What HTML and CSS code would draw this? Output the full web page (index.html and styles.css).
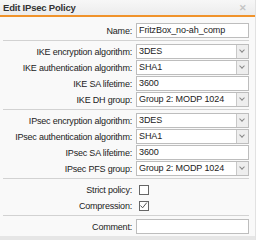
FILE: index.html
```html
<!DOCTYPE html>
<html>
<head>
    <meta charset="utf-8">
    <title>Edit IPsec Policy</title>
    <link rel="stylesheet" href="styles.css">
</head>
<body>
    <div class="dialog">
        <div class="dialog-header">
            <span class="dialog-title">Edit IPsec Policy</span>
            <span class="dialog-close">&#x2715;</span>
        </div>
        <div class="dialog-body">
            <div class="section">
                <div class="row">
                    <label>Name:</label>
                    <div class="field">FritzBox_no-ah_comp</div>
                </div>
            </div>
            <div class="section">
                <div class="row">
                    <label>IKE encryption algorithm:</label>
                    <div class="field select">3DES<span class="arrow"></span></div>
                </div>
                <div class="row">
                    <label>IKE authentication algorithm:</label>
                    <div class="field select">SHA1<span class="arrow"></span></div>
                </div>
                <div class="row">
                    <label>IKE SA lifetime:</label>
                    <div class="field">3600</div>
                </div>
                <div class="row">
                    <label>IKE DH group:</label>
                    <div class="field select">Group 2: MODP 1024<span class="arrow"></span></div>
                </div>
            </div>
            <div class="section">
                <div class="row">
                    <label>IPsec encryption algorithm:</label>
                    <div class="field select">3DES<span class="arrow"></span></div>
                </div>
                <div class="row">
                    <label>IPsec authentication algorithm:</label>
                    <div class="field select">SHA1<span class="arrow"></span></div>
                </div>
                <div class="row">
                    <label>IPsec SA lifetime:</label>
                    <div class="field">3600</div>
                </div>
                <div class="row">
                    <label>IPsec PFS group:</label>
                    <div class="field select">Group 2: MODP 1024<span class="arrow"></span></div>
                </div>
            </div>
            <div class="section">
                <div class="row">
                    <label>Strict policy:</label>
                    <div><span class="checkbox"></span></div>
                </div>
                <div class="row">
                    <label>Compression:</label>
                    <div><span class="checkbox">
                        <svg width="9" height="9" viewBox="0 0 9 9"><path d="M1.5 4.5 L3.6 6.8 L7.8 1.6" fill="none" stroke="#555" stroke-width="1"/></svg>
                    </span></div>
                </div>
            </div>
            <div class="section">
                <div class="row">
                    <label>Comment:</label>
                    <div class="field"></div>
                </div>
            </div>
        </div>
        <div class="dialog-footer"></div>
    </div>
</body>
</html>
```

FILE: styles.css
```css
body { margin: 0; font-family: "Liberation Sans", Arial, sans-serif; font-size: 9px; color: #222; background: #fff; }
.dialog { width: 255px; height: 240px; background: #f9f9f9; border-right: 1px solid #e2e2e2; display: flex; flex-direction: column; }
.dialog-header { height: 16px; display: flex; align-items: center; justify-content: space-between; padding: 0 8px 0 3px; background: linear-gradient(#f7f7f7, #ececec); border-bottom: 2px solid #f0932b; }
.dialog-title { font-weight: bold; font-size: 9.5px; letter-spacing: -0.2px; color: #333; }
.dialog-close { color: #c4c4c4; font-size: 9px; font-weight: bold; }
.dialog-body { flex: 1; padding: 0 6px 0 3px; }
.section { display: flex; flex-direction: column; gap: 1px; padding: 3px 0 2px; border-top: 1px solid #d2d2d2; }
.section:first-child { border-top: none; padding-top: 6px; }
.row { display: grid; grid-template-columns: 129px 113px; column-gap: 4px; align-items: center; height: 15px; }
.row label { text-align: right; letter-spacing: -0.2px; }
.field { position: relative; height: 13px; line-height: 13px; padding-left: 2px; background: #fff; border: 1px solid #bdbdbd; letter-spacing: -0.1px; }
.select .arrow { position: absolute; top: 0; right: 0; width: 11px; height: 13px; background: #eee; border-left: 1px solid #c8c8c8; }
.select .arrow::after { content: ""; position: absolute; left: 3px; top: 3px; width: 3px; height: 3px; border-right: 1px solid #888; border-bottom: 1px solid #888; transform: rotate(45deg); }
.checkbox { display: block; width: 8px; height: 8px; border: 1px solid #666; background: #fff; margin-left: 3px; position: relative; }
.checkbox svg { position: absolute; left: -1px; top: -1px; }
.dialog-footer { height: 4px; background: #e6e6e6; }
```
